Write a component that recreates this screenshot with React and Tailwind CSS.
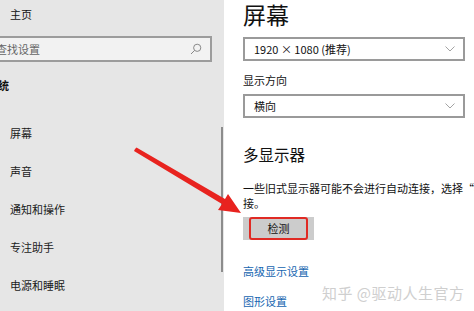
const FONT = '"Microsoft YaHei", "Noto Sans CJK SC", "Noto Sans", sans-serif';

const navItems = ["屏幕", "声音", "通知和操作", "专注助手", "电源和睡眠"];

function Chevron() {
  return (
    <svg width="10" height="6" viewBox="0 0 10 6" fill="none" className="shrink-0">
      <path d="M0.5 0.5l4.5 4.5 4.5-4.5" stroke="#a3a3a3" strokeWidth="1" />
    </svg>
  );
}

function Select({ label }) {
  return (
    <div className="flex h-[24px] w-[222px] items-center justify-between border-2 border-[#9a9a9a] pl-[9px] pr-[8px] text-[11px] text-[#111]">
      <span>{label}</span>
      <Chevron />
    </div>
  );
}

function Sidebar() {
  return (
    <div className="relative h-full w-[224px] shrink-0 bg-[#e6e6e6]">
      <div className="pl-[10px] pt-[6px] text-[11px] leading-[16px] text-[#111]">主页</div>
      <div className="mt-[14px] flex h-[26px] w-[212px] items-center justify-between border-2 border-l-0 border-[#9c9c9c] bg-[#f2f2f2] pr-[8px]">
        <span className="-ml-[4px] text-[11px] text-[#666]">查找设置</span>
        <svg width="12" height="12" viewBox="0 0 12 12" fill="none">
          <circle cx="7.2" cy="4.8" r="3.6" stroke="#888" strokeWidth="1" />
          <path d="M4.6 7.4L1 11" stroke="#888" strokeWidth="1" />
        </svg>
      </div>
      <div className="mt-[15px] -ml-[13px] text-[11px] font-bold leading-[16px] text-[#111]">系统</div>
      <div className="mt-[32px] flex flex-col gap-[22px] pl-[10px]">
        {navItems.map((item) => (
          <div key={item} className="text-[11px] leading-[16px] text-[#1a1a1a]">
            {item}
          </div>
        ))}
      </div>
      <div className="absolute left-[221px] top-[127px] h-[145px] w-[2px] bg-[#8c8c8c]" />
    </div>
  );
}

function Content() {
  return (
    <div className="relative h-full flex-1 overflow-hidden bg-white pl-[19px]">
      <div className="pt-[1px] text-[23px] leading-[26px] text-[#111]">屏幕</div>
      <div className="mt-[10px]">
        <Select label="1920 × 1080 (推荐)" />
      </div>
      <div className="mt-[11px] text-[11px] leading-[16px] text-[#111]">显示方向</div>
      <div className="mt-[6px]">
        <Select label="横向" />
      </div>
      <div className="mt-[26px] text-[15.5px] leading-[20px] text-[#111]">多显示器</div>
      <div className="mt-[17px] w-[240px] whitespace-nowrap text-[11px] leading-[15px] text-[#111]">
        一些旧式显示器可能不会进行自动连接，选择“检测”尝试连
        <br />
        接。
      </div>
      <div className="mt-[6px] flex h-[23px] w-[71px] items-center bg-[#cccccc] pl-[6px]">
        <div className="flex h-[23px] w-[59px] items-center justify-center rounded-[3px] border-2 border-[#e02a24] text-[11px] text-[#111]">
          检测
        </div>
      </div>
      <div className="mt-[23px] text-[11px] leading-[16px] text-[#1565b0]">高级显示设置</div>
      <div className="mt-[14px] text-[11px] leading-[16px] text-[#1565b0]">图形设置</div>
      <div className="absolute left-[98px] top-[284px] text-[15px] leading-[18px] tracking-[0.5px] text-[#cfcfcf]">
        知乎 @驱动人生官方
      </div>
    </div>
  );
}

export default function App() {
  return (
    <div className="relative flex h-[311px] w-[474px] overflow-hidden bg-white" style={{ fontFamily: FONT }}>
      <Sidebar />
      <Content />
      <svg className="pointer-events-none absolute left-0 top-0" width="474" height="311" viewBox="0 0 474 311">
        <polygon points="135,149 136.5,147.5 225,199 228,194 241,213 218,210 222,204 134,151" fill="#e8231f" />
      </svg>
    </div>
  );
}
